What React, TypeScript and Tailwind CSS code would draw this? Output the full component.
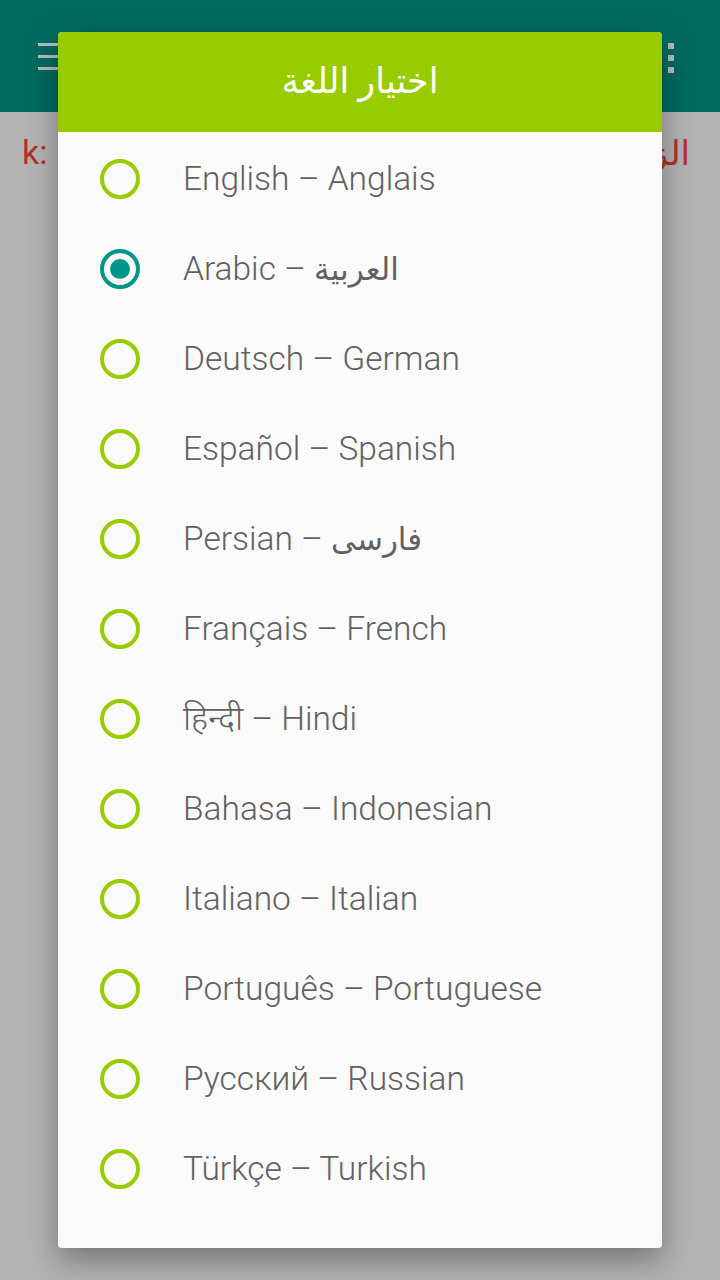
import React from 'react'

const languages: [string, string, boolean][] = [
  ['English', 'Anglais', false],
  ['Arabic', 'العربية', true],
  ['Deutsch', 'German', false],
  ['Español', 'Spanish', false],
  ['Persian', 'فارسی', true],
  ['Français', 'French', false],
  ['हिन्दी', 'Hindi', false],
  ['Bahasa', 'Indonesian', false],
  ['Italiano', 'Italian', false],
  ['Português', 'Portuguese', false],
  ['Русский', 'Russian', false],
  ['Türkçe', 'Turkish', false],
]

function Radio({ checked }: { checked: boolean }) {
  if (checked) {
    return (
      <div className="w-[40px] h-[40px] rounded-full border-[4px] border-[#009688] flex items-center justify-center shrink-0">
        <div className="w-[20px] h-[20px] rounded-full bg-[#009688]" />
      </div>
    )
  }
  return <div className="w-[40px] h-[40px] rounded-full border-[4px] border-[#99cc00] shrink-0" />
}

export default function App() {
  return (
    <div className="relative w-[720px] h-[1280px] overflow-hidden bg-[#b3b3b3] font-['Roboto','Noto_Sans',sans-serif]">
      {/* App bar behind scrim */}
      <div className="h-[112px] bg-[#006a60] flex items-start justify-between pl-[38px] pr-[46px] pt-[43px]">
        <div className="flex flex-col gap-[9px] w-[24px]">
          <div className="h-[3px] bg-[#b5bcbb]" />
          <div className="h-[3px] bg-[#b5bcbb]" />
          <div className="h-[3px] bg-[#b5bcbb]" />
        </div>
        <div className="flex flex-col gap-[6px]">
          <div className="w-[6px] h-[6px] bg-[#b5bcbb]" />
          <div className="w-[6px] h-[6px] bg-[#b5bcbb]" />
          <div className="w-[6px] h-[6px] bg-[#b5bcbb]" />
        </div>
      </div>
      <div className="flex justify-between pl-[22px] pr-[30px] pt-[18px] text-[34px] leading-[44px] text-[#b3302f]">
        <span>k:</span>
        <span className="font-['Noto_Sans','DejaVu_Sans',sans-serif]">الزمن</span>
      </div>

      {/* Dialog */}
      <div className="absolute left-[58px] top-[32px] w-[604px] h-[1216px] rounded-[4px] overflow-hidden bg-[#fafafa] shadow-[0_12px_30px_rgba(0,0,0,0.35)]">
        <div className="h-[100px] pb-[4px] bg-[#99cc00] flex items-center justify-center text-white text-[35px] font-['Noto_Sans','DejaVu_Sans',sans-serif]">
          اختيار اللغة
        </div>
        <div className="pt-[2px]">
          {languages.map(([a, b, rtl], i) => (
            <div key={i} className="h-[90px] flex items-center pl-[42px]">
              <Radio checked={i === 1} />
              <span className="ml-[43px] text-[33.5px] font-light text-[#616161] whitespace-nowrap">
                {a} –{' '}
                {rtl ? (
                  <span className="font-normal text-[31px] font-['Noto_Sans','DejaVu_Sans',sans-serif]">{b}</span>
                ) : (
                  b
                )}
              </span>
            </div>
          ))}
        </div>
      </div>
    </div>
  )
}
